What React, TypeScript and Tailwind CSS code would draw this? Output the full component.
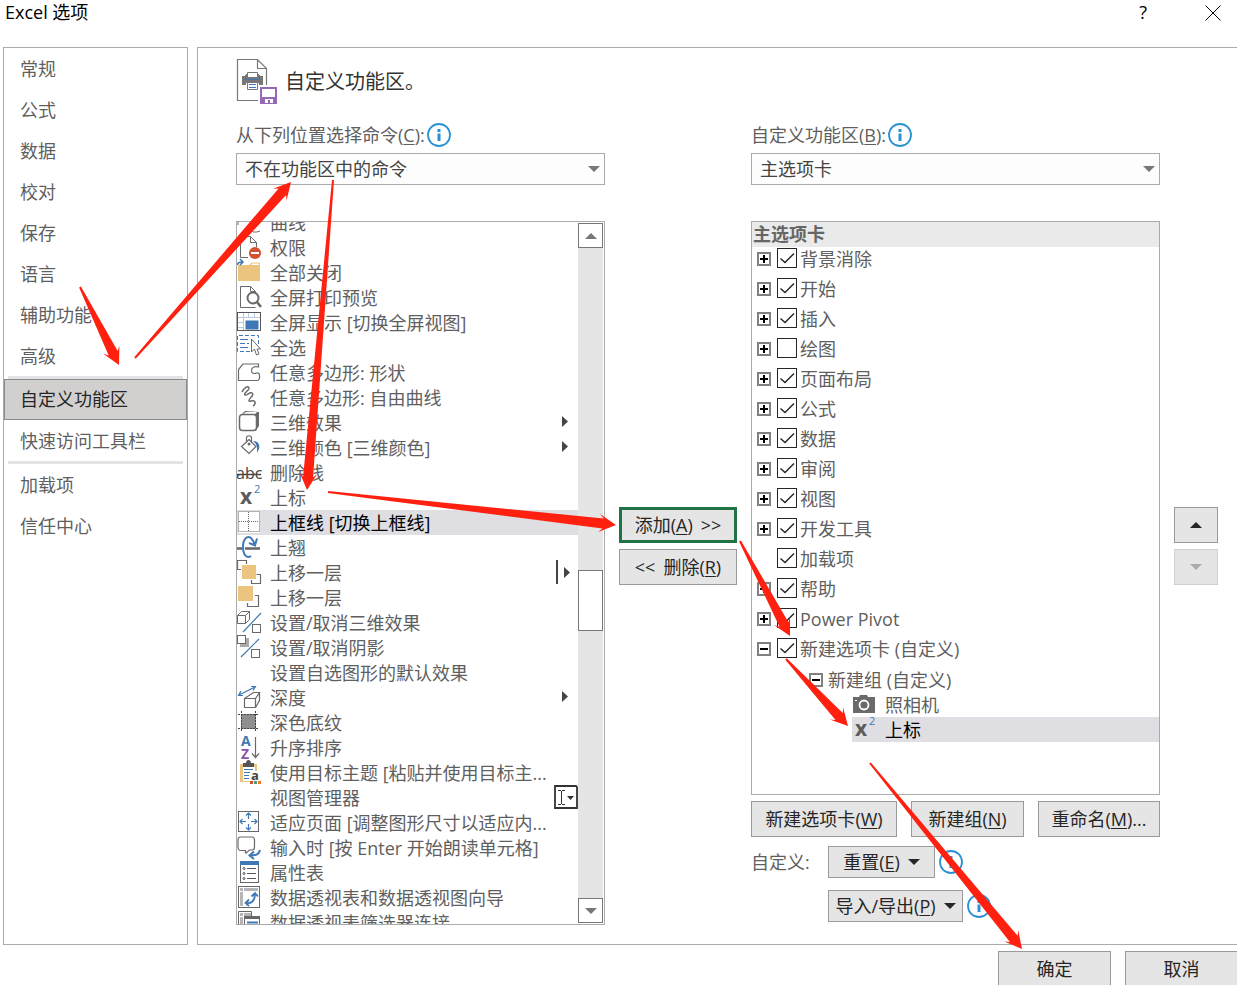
// src/App.tsx

import React, { useState } from "react";

interface Command {
  name: string;
  icon?: keyof typeof icons;
  mark?: "menu" | "split" | "combo";
}

interface RibbonTab {
  name: string;
  checked: boolean;
  toggle: "plus" | "minus" | "none";
}

type Point = [number, number];

const GRAY = "#6a6a6a";
const BLUE = "#3f78b5";
const GOLD = "#ebc47f";

const superscript = (
  <>
    <text x="3" y="19" fontSize="21" fontWeight="700" fill="#5c5c5c">
      x
    </text>
    <text x="17" y="8" fontSize="11" fill={BLUE}>
      2
    </text>
  </>
);

const icons = {
  curve: (
    <path d="M1 12v3M13 20c2 2 5 3 10 1" stroke={GRAY} />
  ),
  permission: (
    <>
      <path d="M11 22.5H3.5v-21h10l6 6V12M13.5 1.5v6h6" stroke={GRAY} />
      <circle cx="18" cy="18" r="6" fill="#d2512e" />
      <path d="M14 18h8" stroke="#fff" strokeWidth="2" />
    </>
  ),
  closeAll: (
    <>
      <path d="M1 5h11l3-2.5h8V21H1z" fill={GOLD} />
      <path d="M14 5l1.5-1.5H22V5z" fill="#fff" />
      <path d="M.5 5C.5 3 2 2 5.5 2M3 -1l3 3-3 3" stroke={BLUE} strokeWidth="1.5" />
    </>
  ),
  printPreview: (
    <>
      <path d="M18.5 22.5h-15v-21h10l5 5v1M13.5 1.5v5h5" stroke={GRAY} />
      <circle cx="16" cy="13" r="5.5" fill="#fff" stroke={GRAY} strokeWidth="2" />
      <path d="M20 17l4 5" stroke={GRAY} strokeWidth="2.5" />
    </>
  ),
  fullScreen: (
    <>
      <path d="M1 7.5h22M1 12.5h6M1 17.5h6M6.5 3v18M11.5 3v5M17.5 3v5" stroke="#b5cbe3" />
      <rect x=".5" y="2.5" width="23" height="18" stroke="#555" />
      <rect x="7" y="9" width="16" height="11" fill="#fff" />
      <rect x="8.5" y="10.5" width="13" height="9" fill={BLUE} />
    </>
  ),
  selectAll: (
    <>
      <path d="M13 16.5H.5V.5h21v10" stroke={BLUE} strokeDasharray="4 2" />
      <path d="M3 4.5h8M3 8.5h5M10 8.5h2M3 12.5h8" stroke={BLUE} />
      <path d="M14.5 4v13l3-3 2 6 2.5-1-2-5h3.5z" fill="#fff" stroke={GRAY} />
    </>
  ),
  freeform: (
    <path
      d="M1.5 20.5V9.5L6 4h15.500v3c-3-1-7 0-7 3.500 0 3 3 3.500 5 2.500 1.500-.5 3 .5 3 2.500v3l-1.500 2z"
      stroke={GRAY}
      strokeWidth="1.200"
    />
  ),
  scribble: (
    <path
      d="M5 7c2-4 6-7 7-4 1 2-6 5-4 7 2 1 4-3 7-2 3 2-4 6-3 8 1 1 3-1 5 0 2 1 1 4-1 5"
      stroke={GRAY}
      strokeWidth="1.500"
    />
  ),
  threeD: (
    <>
      <path d="M4 5l4-4 14 1v14l-3 4V5z" fill={GRAY} />
      <path d="M6 4l3-2h11l-2 2z" fill="#fff" />
      <rect x="2.5" y="4.5" width="17" height="16" rx="3" fill="#fff" stroke={GRAY} strokeWidth="1.500" />
    </>
  ),
  fill: (
    <>
      <path d="M12 4.5l7 7-7 7-7.500-7zM9.500 8V3c0-3 5-3 5 0v5" stroke={GRAY} strokeWidth="1.200" />
      <path d="M16 6c6 0 7 5 6 8l-2 4c0-4 1-8-4-12z" fill={BLUE} />
      <circle cx="12" cy="9" r="1.500" fill={GRAY} />
    </>
  ),
  strike: (
    <>
      <text x="-1" y="19" fontSize="16" fill="#444">
        abc
      </text>
      <path d="M0 14.5h24" stroke="#444" strokeWidth="1.500" />
    </>
  ),
  superscript,
  topBorder: (
    <>
      <rect x="1" y="1" width="22" height="22" fill="#fff" />
      <path
        d="M1.5 1.5h21v20h-21zM11.5 2v20M2 11.5h20"
        stroke="#666"
        strokeDasharray="1 1"
      />
    </>
  ),
  tiltUp: (
    <>
      <path d="M0 13.500h5M8 13.500h15" stroke="#666" strokeWidth="2.500" />
      <path d="M14 21c-4 3-8-1-8-9S10 0 14 3c2 2 3 4 3.500 7M12 8l6 2.500 2-7" stroke={BLUE} strokeWidth="2" />
    </>
  ),
  forward: (
    <>
      <path d="M9.500 4V.5H.5v9H4" stroke={GRAY} strokeWidth="1.200" />
      <rect x="5" y="5" width="14" height="14" fill={GOLD} />
      <path d="M19.500 14.500h4v9h-9V20" stroke={GRAY} strokeWidth="1.200" />
    </>
  ),
  forwardOne: (
    <>
      <rect x="1" y="1" width="15" height="15" fill={GOLD} />
      <path d="M18 10.500h3.500v11h-11V18" stroke={GRAY} strokeWidth="1.200" />
    </>
  ),
  toggle3d: (
    <>
      <path d="M.5 5.500h8v8h-8zM.5 5.500l4-4h8v8l-4 4M8.500 5.500l4-4" stroke={GRAY} />
      <path d="M6 22L24 3" stroke={BLUE} strokeWidth="1.200" />
      <rect x="15.500" y="14.500" width="8" height="8" stroke={GRAY} />
    </>
  ),
  toggleShadow: (
    <>
      <rect x="3" y="3" width="9" height="9" fill="#aaa" />
      <rect x=".5" y=".5" width="8" height="8" fill="#fff" stroke={GRAY} />
      <path d="M4 22L22 4" stroke={BLUE} strokeWidth="1.200" />
      <rect x="14.500" y="14.500" width="8" height="8" stroke={GRAY} />
    </>
  ),
  depth: (
    <>
      <path d="M2 10L18 2M6 10.500H1.500L4 6M14 1.500h4.500L16 5.500" stroke={BLUE} strokeWidth="1.200" />
      <path d="M7.500 13.500h11v9h-11zM7.500 13.500l9-6h6l-4 6M22.500 7.500v8l-4 7" stroke={GRAY} strokeWidth="1.200" />
    </>
  ),
  shading: (
    <>
      <rect x="4" y="4" width="15" height="15" fill="#8f8f8f" />
      <path d="M1 4.500h21M1 18.500h21M4.500 1v21M18.500 1v21" stroke="#444" strokeDasharray="2 1" />
    </>
  ),
  sortAsc: (
    <>
      <text x="4" y="11" fontSize="14" fontWeight="700" fill={BLUE}>
        A
      </text>
      <text x="4" y="24" fontSize="14" fontWeight="700" fill="#8e53a8">
        Z
      </text>
      <path d="M18.500 2v20M15 18.500l3.500 4 3.500-4" stroke={GRAY} strokeWidth="1.200" />
    </>
  ),
  pasteTheme: (
    <>
      <path d="M3 4h17v18H3z" fill={GOLD} />
      <path d="M6 7h12v4h2v10H6z" fill="#fff" />
      <path d="M6 7V3h3c0-4 5-4 5 0h3v4z" fill="#555" />
      <path d="M7 9.500h9M7 12.500h6M7 15.500h5M7 18.500h5" stroke={BLUE} />
      <text x="14" y="20" fontSize="13" fontWeight="700" fill="#444">
        a
      </text>
      <path d="M13 21h3v3h-3z" fill="#d2512e" />
      <path d="M17 21h3v3h-3z" fill="#4f9e84" />
      <path d="M21 21h3v3h-3z" fill="#e87b1e" />
    </>
  ),
  fitPage: (
    <>
      <rect x="1.500" y="1.500" width="20" height="20" stroke="#666" />
      <path
        d="M11.500 3v6M11.500 14v6M3 11.500h6M14 11.500h6M9 5.500l2.500-2.500L14 5.500M9 17.500l2.500 2.500 2.500-2.500M5.500 9L3 11.500 5.500 14M17.500 9l2.500 2.500-2.500 2.500"
        stroke={BLUE}
        strokeWidth="1.200"
      />
    </>
  ),
  speak: (
    <>
      <path d="M8.500 18v-2.500H3.500C2 15.500 1 14 1 12V5c0-2 1-3 2.500-3H15c1.500 0 2.500 1 2.500 3v7c0 2-1 3-2.500 3h-2.500L8.500 18.500" stroke={GRAY} strokeWidth="1.200" />
      <path d="M23 15c-1 5-5 5.500-10 5.500M17 16.500l-4.500 4 4.500 3.500" stroke={BLUE} strokeWidth="2" />
    </>
  ),
  properties: (
    <>
      <rect x="3.500" y="1.500" width="18" height="21" stroke="#666" />
      <rect x="3" y="1" width="19" height="4" fill={BLUE} />
      <path d="M10 8.500h9M10 13.500h9M10 18.500h9" stroke="#555" />
      <circle cx="7" cy="8.500" r="1" stroke="#555" />
      <circle cx="7" cy="13.500" r="1" stroke="#555" />
      <circle cx="7" cy="18.500" r="1" stroke="#555" />
    </>
  ),
  pivot: (
    <>
      <rect x="1.500" y="1.500" width="21" height="21" stroke="#666" />
      <path d="M3 3h3v3H3zM7 3h14v3H7zM3 7h3v14H3z" fill="#b5b5b5" />
      <path d="M9 18c5 1 9-2 9-9M12 14.500L8.500 18l3.500 3M14.500 11.500L18 8l3 3.500" stroke={BLUE} strokeWidth="1.800" />
    </>
  ),
  slicer: (
    <>
      <path d="M1.500 15V1.500h13V6" stroke="#666" />
      <path d="M3 3h3v3H3zM7 3h7v3H7zM3 7h3v8H3z" fill="#b5b5b5" />
      <path d="M7.500 15V6.500h15V15" stroke="#666" />
      <path d="M7 6h16v3H7z" fill="#666" />
      <path d="M10 12.500h11" stroke={BLUE} strokeWidth="2" />
    </>
  ),
  camera: (
    <>
      <path d="M1 5h6l1-2h7l1 2h7v16H1z" fill="#6a6a6a" />
      <circle cx="12" cy="13" r="4.500" stroke="#fff" strokeWidth="1.800" />
      <path d="M3 8.500h2" stroke="#fff" />
    </>
  ),
};

const marks = {
  menu: <path d="M8 6l6 5.500L8 17z" fill="#444" />,
  split: <path d="M2 0h2v24H2zM10 7l6 5.500-6 5.500z" fill="#444" />,
  combo: (
    <>
      <path d="M1 1h21l1 1v21H1z" stroke="#333" strokeWidth="1.800" />
      <path d="M7.500 6v13M4 5.500h3M8 5.500h3M4 19.500h3M8 19.500h3" stroke="#333" />
      <path d="M13 11h7l-3.500 4z" fill="#333" />
    </>
  ),
};

const sections: string[][] = [
  ["常规", "公式", "数据", "校对", "保存", "语言", "辅助功能", "高级"],
  ["自定义功能区", "快速访问工具栏"],
  ["加载项", "信任中心"],
];

const commands: Command[] = [
  { name: "曲线", icon: "curve" },
  { name: "权限", icon: "permission" },
  { name: "全部关闭", icon: "closeAll" },
  { name: "全屏打印预览", icon: "printPreview" },
  { name: "全屏显示 [切换全屏视图]", icon: "fullScreen" },
  { name: "全选", icon: "selectAll" },
  { name: "任意多边形: 形状", icon: "freeform" },
  { name: "任意多边形: 自由曲线", icon: "scribble" },
  { name: "三维效果", icon: "threeD", mark: "menu" },
  { name: "三维颜色 [三维颜色]", icon: "fill", mark: "menu" },
  { name: "删除线", icon: "strike" },
  { name: "上标", icon: "superscript" },
  { name: "上框线 [切换上框线]", icon: "topBorder" },
  { name: "上翘", icon: "tiltUp" },
  { name: "上移一层", icon: "forward", mark: "split" },
  { name: "上移一层", icon: "forwardOne" },
  { name: "设置/取消三维效果", icon: "toggle3d" },
  { name: "设置/取消阴影", icon: "toggleShadow" },
  { name: "设置自选图形的默认效果" },
  { name: "深度", icon: "depth", mark: "menu" },
  { name: "深色底纹", icon: "shading" },
  { name: "升序排序", icon: "sortAsc" },
  { name: "使用目标主题 [粘贴并使用目标主...", icon: "pasteTheme" },
  { name: "视图管理器", mark: "combo" },
  { name: "适应页面 [调整图形尺寸以适应内...", icon: "fitPage" },
  { name: "输入时 [按 Enter 开始朗读单元格]", icon: "speak" },
  { name: "属性表", icon: "properties" },
  { name: "数据透视表和数据透视图向导", icon: "pivot" },
  { name: "数据透视表筛选器连接", icon: "slicer" },
];

const initialTabs: RibbonTab[] = [
  { name: "背景消除", checked: true, toggle: "plus" },
  { name: "开始", checked: true, toggle: "plus" },
  { name: "插入", checked: true, toggle: "plus" },
  { name: "绘图", checked: false, toggle: "plus" },
  { name: "页面布局", checked: true, toggle: "plus" },
  { name: "公式", checked: true, toggle: "plus" },
  { name: "数据", checked: true, toggle: "plus" },
  { name: "审阅", checked: true, toggle: "plus" },
  { name: "视图", checked: true, toggle: "plus" },
  { name: "开发工具", checked: true, toggle: "plus" },
  { name: "加载项", checked: true, toggle: "none" },
  { name: "帮助", checked: true, toggle: "plus" },
  { name: "Power Pivot", checked: true, toggle: "plus" },
  { name: "新建选项卡 (自定义)", checked: true, toggle: "minus" },
];

const arrows: { from: Point; to: Point }[] = [
  { from: [80, 287], to: [119, 365] },
  { from: [135, 358], to: [291, 182] },
  { from: [333, 180], to: [307, 490] },
  { from: [328, 492], to: [616, 525] },
  { from: [740, 541], to: [790, 636] },
  { from: [786, 659], to: [848, 726] },
  { from: [870, 763], to: [1022, 949] },
];

// Tapered arrow: thin at the tail, wide at the neck, barbs swept slightly back
const arrowPoints = (from: Point, to: Point): string => {
  const dx = to[0] - from[0];
  const dy = to[1] - from[1];
  const len = Math.hypot(dx, dy);
  const at = (back: number, side: number) => {
    const x = to[0] - (dx / len) * back - (dy / len) * side;
    const y = to[1] - (dy / len) * back + (dx / len) * side;
    return `${x.toFixed(1)},${y.toFixed(1)}`;
  };
  return [
    at(len, 1),
    at(13, 5),
    at(17, 9),
    at(0, 0),
    at(17, -9),
    at(13, -5),
    at(len, -1),
  ].join(" ");
};

const Icon: React.FC<{ children?: React.ReactNode }> = ({ children }) => (
  <svg
    className="h-[25px] w-6 shrink-0 overflow-visible font-['Open_Sans',sans-serif]"
    viewBox="0 0 24 25"
    fill="none"
    aria-hidden="true"
  >
    {children}
  </svg>
);

const Triangle: React.FC<{ up?: boolean }> = ({ up }) => (
  <svg className="h-[6px] w-3 shrink-0" viewBox="0 0 12 6" fill="currentColor" aria-hidden="true">
    <path d={up ? "M0 6h12L6 0z" : "M0 0h12L6 6z"} />
  </svg>
);

const InfoIcon: React.FC = () => (
  <svg className="h-6 w-6 shrink-0" viewBox="0 0 24 24" fill="none" aria-hidden="true">
    <circle cx="12" cy="12" r="11" stroke="#2a92d2" strokeWidth="1.800" />
    <path d="M10.500 6h3v3h-3zM10.500 10.500h3V18h-3z" fill="#2a92d2" />
  </svg>
);

const HotKey: React.FC<{ text: string; letter: string }> = ({ text, letter }) => (
  <span>
    {text}(<span className="underline underline-offset-2">{letter}</span>)
  </span>
);

const Toggle: React.FC<{ kind: "plus" | "minus"; label: string }> = ({ kind, label }) => (
  <button aria-label={label} className="h-[14px] w-[14px] shrink-0">
    <svg viewBox="0 0 14 14" fill="none">
      <rect x="1" y="1" width="12" height="12" fill="#fff" stroke="#808080" strokeWidth="2" />
      <path d={kind === "plus" ? "M3 7h8M7 3v8" : "M3 7h8"} stroke="#000" strokeWidth="2" />
    </svg>
  </button>
);

const SelectBox: React.FC<{ id: string; value: string }> = ({ id, value }) => (
  <div className="relative text-[#777]">
    <select
      id={id}
      className="block h-8 w-full appearance-none border border-[#ababab] bg-[#fdfdfd] pl-2 text-[#444]"
    >
      <option>{value}</option>
    </select>
    <div className="pointer-events-none absolute top-3 right-[5px] flex h-2 items-center">
      <Triangle />
    </div>
  </div>
);

const buttonStyle =
  "flex items-center justify-center border border-[#9a9a9a] bg-[#e5e5e5] whitespace-nowrap text-[#262626]";

const App: React.FC = () => {
  const [section, setSection] = useState("自定义功能区");
  const [command, setCommand] = useState(12);
  const [tabs, setTabs] = useState<RibbonTab[]>(initialTabs);

  const toggleTab = (index: number) => {
    setTabs(
      tabs.map((tab, i) => (i === index ? { ...tab, checked: !tab.checked } : tab))
    );
  };

  return (
    <div className="relative flex h-screen flex-col overflow-hidden bg-white font-['Open_Sans','Noto_Sans_CJK_SC',sans-serif] text-[18px] leading-[25px] text-[#5f5f5f]">
      {/* Title bar */}
      <header className="flex h-[47px] shrink-0 items-start justify-between pr-4 pl-[5px] text-black">
        <h1>Excel 选项</h1>
        <div className="flex items-start gap-[58px]">
          <button aria-label="帮助">?</button>
          <button aria-label="关闭" className="flex h-[25px] items-center">
            <svg className="h-4 w-4" viewBox="0 0 16 16" fill="none" stroke="#000">
              <path d="M.5.5l15 15M15.500.5l-15 15" />
            </svg>
          </button>
        </div>
      </header>

      <div className="flex h-[898px] shrink-0 gap-[9px] pl-[3px]">
        {/* Sections */}
        <nav className="w-[185px] shrink-0 border border-[#ababab]">
          {sections.map((group, g) => (
            <div key={g}>
              {g > 0 && <div className="mx-1 h-[3px] bg-[#e3e3e6]" />}
              {group.map((name) => (
                <button
                  key={name}
                  onClick={() => setSection(name)}
                  className={
                    name === section
                      ? "block h-[41px] w-full border border-[#8a8a8a] bg-[#d2d0ce] pl-[15px] text-left text-[#262626]"
                      : "block h-[41px] w-full pt-px pl-4 text-left"
                  }
                >
                  {name}
                </button>
              ))}
            </div>
          ))}
        </nav>

        <main className="min-w-0 grow border-y border-l border-[#ababab] pt-[10px] pr-[19px] pl-[38px]">
          <div className="flex h-[46px] items-center gap-2">
            <svg className="h-[46px] w-[41px]" viewBox="0 0 41 46" fill="none" aria-hidden="true">
              <path d="M22 42.500H1.500V1.500h20l9 9V27M21.500 1.500v9h9" stroke="#777" strokeWidth="1.200" />
              <path d="M6 18h4v-2h13v2h4v9h-4v-2H10v2H6z" fill="#777" />
              <path d="M11.500 14.500h10v5h-10zM11.500 24.500h10v7h-10z" fill="#fff" stroke="#777" />
              <path d="M9.500 17v4.500h14V17M13 26.500h7M13 29.500h7" stroke={BLUE} />
              <rect x="24" y="29" width="17" height="17" fill="#9668b8" />
              <path d="M26 31h13v8H26zM29 41h8v4h-3v-3h-2v3h-3z" fill="#fff" />
            </svg>
            <h2 className="text-[20px] text-[#333]">自定义功能区。</h2>
          </div>

          <div className="grid grid-cols-[369fr_118px_409fr_44px] gap-x-[14px] pt-[19px]">
            {/* Available commands */}
            <section className="min-w-0">
              <div className="flex h-[30px] items-start gap-[2px]">
                <label htmlFor="source" className="leading-6">
                  <HotKey text="从下列位置选择命令" letter="C" />:
                </label>
                <InfoIcon />
              </div>
              <SelectBox id="source" value="不在功能区中的命令" />
              <div className="mt-9 flex h-[704px] border border-[#ababab]">
                <ul className="min-w-0 grow overflow-hidden">
                  {commands.map((item, i) => (
                    <li key={i} className="first:-mt-3">
                      <button
                        onClick={() => setCommand(i)}
                        className={
                          i === command
                            ? "flex h-[25px] w-full items-center gap-[9px] bg-[#dfdee3] whitespace-nowrap text-black"
                            : "flex h-[25px] w-full items-center gap-[9px] whitespace-nowrap"
                        }
                      >
                        <Icon>{item.icon && icons[item.icon]}</Icon>
                        <span className="min-w-0 grow pt-[2px] text-left">{item.name}</span>
                        {item.mark && <Icon>{marks[item.mark]}</Icon>}
                      </button>
                    </li>
                  ))}
                </ul>
                <div className="my-px mr-px flex w-[25px] shrink-0 flex-col bg-[#e5e5e5] text-[#777]">
                  <button
                    aria-label="向上滚动"
                    className="flex h-[25px] items-center justify-center border border-[#777] bg-white"
                  >
                    <Triangle up />
                  </button>
                  <div className="grow-[322]" />
                  <div className="h-[61px] border border-[#777] bg-white" />
                  <div className="grow-[267]" />
                  <button
                    aria-label="向下滚动"
                    className="flex h-[25px] items-center justify-center border border-[#777] bg-white"
                  >
                    <Triangle />
                  </button>
                </div>
              </div>
            </section>

            {/* Add / remove */}
            <div className="flex flex-col gap-[6px] pt-[384px]">
              <button className="flex h-9 items-center justify-center border-3 border-[#217346] bg-[#e5e5e5] whitespace-nowrap text-[#262626]">
                <HotKey text="添加" letter="A" />
                <span className="pl-2">&gt;&gt;</span>
              </button>
              <button className={`${buttonStyle} h-9`}>
                <span className="pr-2">&lt;&lt;</span>
                <HotKey text="删除" letter="R" />
              </button>
            </div>

            {/* Ribbon tree */}
            <section className="min-w-0">
              <div className="flex h-[30px] items-start gap-[2px]">
                <label htmlFor="ribbon" className="leading-6">
                  <HotKey text="自定义功能区" letter="B" />:
                </label>
                <InfoIcon />
              </div>
              <SelectBox id="ribbon" value="主选项卡" />
              <div className="mt-9 h-[574px] border border-[#ababab]">
                <h3 className="mb-px h-[25px] bg-[#eaeaea] pl-px font-bold text-[#666]">
                  主选项卡
                </h3>
                <ul>
                  {tabs.map((tab, i) => (
                    <li key={tab.name} className="flex h-[30px] items-start gap-[6px] pl-[5px]">
                      <div className="flex h-[22px] w-[14px] items-center">
                        {tab.toggle !== "none" && (
                          <Toggle kind={tab.toggle} label={`展开 ${tab.name}`} />
                        )}
                      </div>
                      <label className="relative flex items-start gap-[3px] leading-[22px]">
                        <input
                          type="checkbox"
                          checked={tab.checked}
                          onChange={() => toggleTab(i)}
                          className="peer h-5 w-5 appearance-none border border-[#262626] bg-white"
                        />
                        <svg
                          className="pointer-events-none absolute top-0 left-0 hidden h-5 w-5 peer-checked:block"
                          viewBox="0 0 20 20"
                          fill="none"
                          aria-hidden="true"
                        >
                          <path d="M3.500 10.500l4.500 4L17 5.500" stroke="#262626" strokeWidth="1.500" />
                        </svg>
                        {tab.name}
                      </label>
                    </li>
                  ))}
                </ul>
                <div className="flex h-6 items-center gap-[5px] pl-[57px]">
                  <Toggle kind="minus" label="折叠 新建组" />
                  新建组 (自定义)
                </div>
                <div className="pl-[100px]">
                  <button className="flex h-[25px] w-full items-center gap-[9px]">
                    <Icon>{icons.camera}</Icon>
                    <span className="pt-[2px]">照相机</span>
                  </button>
                  <button className="flex h-[25px] w-full items-center gap-[9px] bg-[#dfdee3] text-black">
                    <Icon>{icons.superscript}</Icon>
                    <span className="pt-[2px]">上标</span>
                  </button>
                </div>
              </div>

              <div className="mt-[6px] flex justify-between">
                <button className={`${buttonStyle} h-9 w-[146px]`}>
                  <HotKey text="新建选项卡" letter="W" />
                </button>
                <button className={`${buttonStyle} h-9 w-[113px]`}>
                  <HotKey text="新建组" letter="N" />
                </button>
                <button className={`${buttonStyle} h-9 w-[122px]`}>
                  <HotKey text="重命名" letter="M" />
                  ...
                </button>
              </div>
              <div className="mt-[9px] grid grid-cols-[77px_1fr] items-center gap-y-3">
                <span>自定义:</span>
                <div className="flex items-center gap-1">
                  <button className={`${buttonStyle} h-8 w-[107px] gap-2`}>
                    <HotKey text="重置" letter="E" />
                    <Triangle />
                  </button>
                  <InfoIcon />
                </div>
                <div className="col-start-2 flex items-center gap-1">
                  <button className={`${buttonStyle} h-8 w-[135px] gap-2`}>
                    <HotKey text="导入/导出" letter="P" />
                    <Triangle />
                  </button>
                  <InfoIcon />
                </div>
              </div>
            </section>

            {/* Reorder */}
            <div className="flex flex-col gap-[6px] pt-[384px]">
              <button aria-label="上移" className={`${buttonStyle} h-9`}>
                <Triangle up />
              </button>
              <button
                aria-label="下移"
                disabled
                className="flex h-9 items-center justify-center border border-[#d0d0d0] bg-[#e5e5e5] text-[#ababab]"
              >
                <Triangle />
              </button>
            </div>
          </div>
        </main>
      </div>

      <footer className="-mr-px flex shrink-0 justify-end gap-[14px] pt-[6px]">
        <button className={`${buttonStyle} h-9 w-[113px]`}>确定</button>
        <button className={`${buttonStyle} h-9 w-[113px]`}>取消</button>
      </footer>

      {/* Step arrows drawn over the dialog */}
      <svg className="pointer-events-none absolute inset-0 h-full w-full" fill="#ff2010" aria-hidden="true">
        {arrows.map(({ from, to }, i) => (
          <polygon key={i} points={arrowPoints(from, to)} />
        ))}
      </svg>
    </div>
  );
};

export default App;
